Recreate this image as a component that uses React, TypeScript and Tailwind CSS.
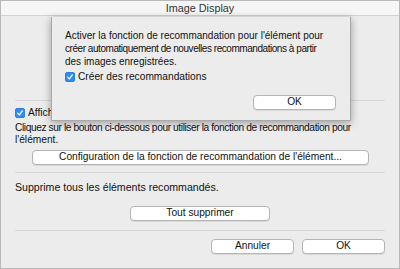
import React from 'react';

const font = { fontFamily: '"Liberation Sans", Arial, sans-serif' };

const Check: React.FC = () => (
  <span className="inline-flex h-[10px] w-[10px] shrink-0 items-center justify-center rounded-[2px] bg-[#2f8cf6] border border-[#2a7fe0]">
    <svg viewBox="0 0 10 10" className="h-[8px] w-[8px]">
      <path d="M2 5.2 L4.2 7.4 L8 2.4" fill="none" stroke="white" strokeWidth="1.6" strokeLinecap="round" strokeLinejoin="round" />
    </svg>
  </span>
);

const Btn: React.FC<{ label: string; className?: string }> = ({ label, className }) => (
  <button
    className={`flex h-[15px] items-center justify-center rounded-[4px] border border-[#b4b4b4] bg-white text-[10.2px] leading-none text-[#111] shadow-[0_1px_0_rgba(0,0,0,0.08)] ${className ?? ''}`}
  >
    {label}
  </button>
);

export default function App() {
  return (
    <div className="relative h-[269px] w-[400px] overflow-hidden border border-[#b9b9b9] bg-[#ececec] text-[10.2px] text-[#111]" style={font}>
      {/* title bar */}
      <div className="flex h-[15px] items-center justify-center border-b border-[#d2d2d2] bg-[#f6f6f6] text-[10.8px] text-[#333]">
        Image Display
      </div>

      {/* window body */}
      <div className="flex flex-col px-[14px]">
        <div className="mt-[84px] h-px bg-[#d6d6d6]" />
        <div className="mt-[6px] flex h-[11px] items-center gap-[3px]">
          <Check />
          <span>Afficher les recommandations</span>
        </div>
        <p className="mt-[4px] whitespace-nowrap leading-[12px]">
          <span className="tracking-[-0.4px]">Cliquez sur le bouton ci-dessous pour utiliser la fonction de recommandation pour</span>
          <br />
          l'élément.
        </p>
        <Btn label="Configuration de la fonction de recommandation de l'élément..." className="ml-[17px] mt-[4px] w-[337px]" />
        <div className="mt-[7px] h-px bg-[#d6d6d6]" />
        <p className="mt-[8px] text-[10.6px] leading-[12px]">Supprime tous les éléments recommandés.</p>
        <div className="mt-[13px] flex justify-center">
          <Btn label="Tout supprimer" className="w-[140px]" />
        </div>
        <div className="mt-[9px] h-px bg-[#d6d6d6]" />
        <div className="mt-[8px] flex justify-end gap-[8px]">
          <Btn label="Annuler" className="w-[83px]" />
          <Btn label="OK" className="w-[83px]" />
        </div>
      </div>

      {/* sheet dialog */}
      <div className="absolute left-[50px] top-[16px] flex h-[104px] w-[300px] flex-col bg-[#ececec] px-[13px] pt-[12px] shadow-[0_2px_8px_rgba(0,0,0,0.35)] border-x border-b border-[#a8a8a8]">
        <p className="whitespace-nowrap text-[10px] leading-[13px]">
          Activer la fonction de recommandation pour l'élément pour
          <br />
          <span className="tracking-[-0.45px]">créer automatiquement de nouvelles recommandations à partir</span>
          <br />
          des images enregistrées.
        </p>
        <div className="mt-[3px] flex h-[11px] items-center gap-[3px]">
          <Check />
          <span>Créer des recommandations</span>
        </div>
        <div className="mt-[13px] flex justify-end pr-[1px]">
          <Btn label="OK" className="w-[83px]" />
        </div>
      </div>
    </div>
  );
}
